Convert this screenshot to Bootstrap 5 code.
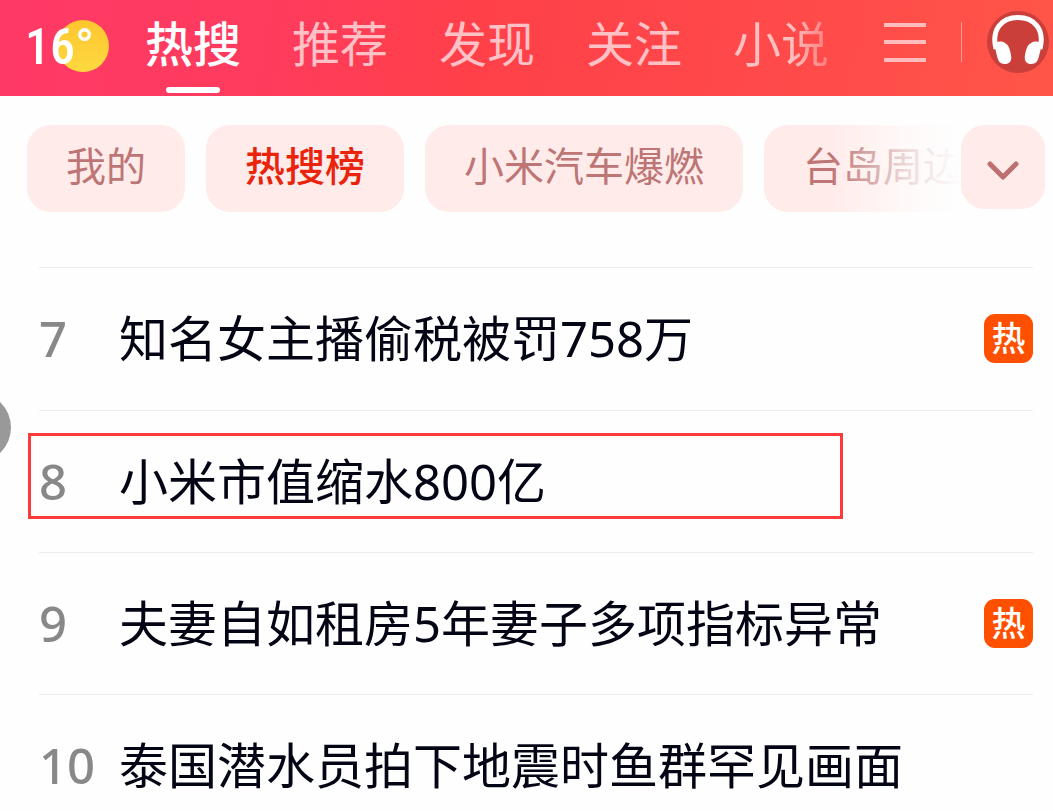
<!DOCTYPE html>
<html lang="zh-CN">
<head>
<meta charset="utf-8">
<meta name="viewport" content="width=device-width, initial-scale=1">
<title>热搜榜</title>
<link href="https://cdn.jsdelivr.net/npm/bootstrap@5.3.0/dist/css/bootstrap.min.css" rel="stylesheet">
<style>
  body { font-family: "Noto Sans", "Noto Sans CJK SC", sans-serif; background: #fefefe; color: #030515; overflow-x: hidden; }
  a { text-decoration: none; color: inherit; }
  .top-bar { height: 96px; padding: 0 4px 0 27px; background: linear-gradient(100deg, #ff3966 0%, #ff3b5e 25%, #ff4049 45%, #ff4a4a 75%, #ff5548 100%); color: #fff; }
  .weather { width: 83px; height: 60px; margin: 15px 35px 0 0; }
  .weather svg { display: block; overflow: visible; }
  .weather text { font-family: "Roboto Condensed", Roboto, sans-serif; font-size: 50px; font-weight: 500; fill: #fff; }
  .tabs { gap: 51px; }
  .tabs a { position: relative; font-size: 48px; line-height: 88px; white-space: nowrap; color: #ffc0c6; }
  .tabs a.active { color: #fff; font-weight: 500; }
  .tabs a.active::after { content: ""; position: absolute; left: 21px; right: 21px; bottom: 3px; height: 6px; border-radius: 3px; background: #fff; }
  .tabs a.fading { background: linear-gradient(90deg, #ffc0c0 60%, #ff7a78 100%); background-clip: text; -webkit-background-clip: text; color: transparent; }
  .tools { padding-bottom: 12px; }
  .rule { width: 1px; height: 40px; background: #ff9a96; margin: 0 25px 0 35px; }
  .chips { padding: 29px 8px 55px 27px; }
  .chip-strip { gap: 21px; overflow: hidden; min-width: 0; }
  .chip, .chip-more { border: 0; background: #ffecea; color: #bd7575; border-radius: 24px; flex: none; }
  .chip { height: 87px; padding: 0 39px 6px; font-size: 40px; line-height: 81px; white-space: nowrap; }
  .chip.active { color: #ea240c; font-weight: 500; }
  .chip-strip::after { content: ""; position: absolute; top: 0; bottom: 0; right: 0; width: 130px; background: linear-gradient(90deg, rgba(254,254,254,0), rgba(254,254,254,.75) 60%, #fefefe); pointer-events: none; }
  .chip-more { width: 84px; height: 84px; }
  .ranks { margin: 0 20px 0 39px; }
  .ranks li { position: relative; border-top: 1px solid #ececec; padding: 35px 0 37px; }
  .ranks li + li { padding-bottom: 36px; }
  .ranks li:last-child { padding-bottom: 0; }
  .ranks a { height: 70px; }
  .rank-no { width: 80px; font-size: 49px; line-height: 70px; color: #888; font-weight: 500; }
  .topic { font-size: 49px; line-height: 70px; white-space: nowrap; }
  .hot { width: 49px; height: 49px; border-radius: 11px; background: #ff4f00; color: #fff; font-size: 34px; line-height: 48px; font-weight: 500; }
  .marked::after { content: ""; position: absolute; left: -11px; top: 22px; width: 82%; height: 86px; border: 3px solid #fb3a3a; pointer-events: none; }
  .float-ball { position: fixed; left: -60px; top: 392px; width: 71px; height: 71px; border: 0; border-radius: 50%; background: #999; }
</style>
</head>
<body>
<header class="top-bar d-flex">
  <a href="#" class="weather flex-shrink-0" aria-label="天气">
    <svg width="84" height="60" viewBox="0 0 84 60">
      <defs><linearGradient id="sun" x1="0" y1="0" x2="0" y2="1"><stop offset="0" stop-color="#ffc62e"/><stop offset="1" stop-color="#fdd840"/></linearGradient></defs>
      <circle cx="56" cy="31" r="26" fill="url(#sun)"/>
      <text x="-2" y="49">16°</text>
    </svg>
  </a>
  <nav class="tabs d-flex" aria-label="频道">
    <a href="#" class="active" aria-current="page">热搜</a>
    <a href="#">推荐</a>
    <a href="#">发现</a>
    <a href="#">关注</a>
    <a href="#" class="fading">小说</a>
  </nav>
  <div class="tools d-flex align-items-center ms-auto">
    <button type="button" class="btn p-0 border-0 d-flex" aria-label="菜单">
      <svg width="42" height="40" viewBox="0 0 42 40" stroke="#ffbcbc" stroke-width="4"><path d="M0 3H42M0 20H42M0 38H42"/></svg>
    </button>
    <span class="rule"></span>
    <button type="button" class="btn p-0 border-0 d-flex" aria-label="听">
      <svg width="62" height="62" viewBox="0 0 62 62">
        <circle cx="31" cy="31" r="31" fill="#cb3f3b"/>
        <path d="M9 38C4 18 15 6.500 31 6.500S58 18 53 38" fill="none" stroke="#fff" stroke-width="5"/>
        <path d="M7 33C9 30 15 30 18 32C22 34 23 39 24 44C25 49 23 53 18 53C13 53 11 50 10 45ZM55 33C53 30 47 30 44 32C40 34 39 39 38 44C37 49 39 53 44 53C49 53 51 50 52 45Z" fill="#fff"/>
      </svg>
    </button>
  </div>
</header>
<main>
  <div class="chips d-flex align-items-start">
    <div class="chip-strip d-flex flex-fill position-relative">
      <button type="button" class="chip">我的</button>
      <button type="button" class="chip active">热搜榜</button>
      <button type="button" class="chip">小米汽车爆燃</button>
      <button type="button" class="chip">台岛周边</button>
    </div>
    <button type="button" class="chip-more d-flex align-items-center justify-content-center p-0" aria-label="展开">
      <svg width="32" height="20" viewBox="0 0 32 20" class="mt-2"><path d="M3 3L16 16L29 3" fill="none" stroke="#bd7070" stroke-width="5" stroke-linecap="round" stroke-linejoin="round"/></svg>
    </button>
  </div>
  <ol class="ranks list-unstyled">
    <li><a href="#" class="d-flex align-items-center"><span class="rank-no">7</span><span class="topic">知名女主播偷税被罚758万</span><span class="hot ms-auto text-center">热</span></a></li>
    <li class="marked"><a href="#" class="d-flex align-items-center"><span class="rank-no">8</span><span class="topic">小米市值缩水800亿</span></a></li>
    <li><a href="#" class="d-flex align-items-center"><span class="rank-no">9</span><span class="topic">夫妻自如租房5年妻子多项指标异常</span><span class="hot ms-auto text-center">热</span></a></li>
    <li><a href="#" class="d-flex align-items-center"><span class="rank-no">10</span><span class="topic">泰国潜水员拍下地震时鱼群罕见画面</span></a></li>
  </ol>
</main>
<button type="button" class="float-ball" aria-label="悬浮球"></button>
<script src="https://cdn.jsdelivr.net/npm/bootstrap@5.3.0/dist/js/bootstrap.bundle.min.js"></script>
</body>
</html>
